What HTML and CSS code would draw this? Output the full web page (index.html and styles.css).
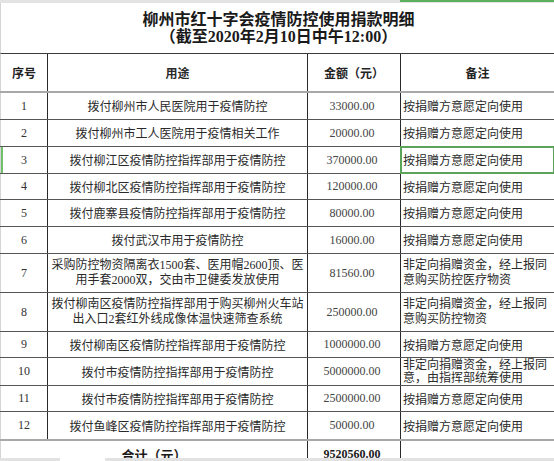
FILE: index.html
```html
<!DOCTYPE html>
<html lang="zh">
<head>
<meta charset="utf-8">
<title>柳州市红十字会疫情防控使用捐款明细</title>
<link rel="stylesheet" href="styles.css">
</head>
<body>
<div class="sheet">
  <div class="topbar"><div class="topgap"></div><div class="topsel"></div></div>
  <div class="title">
    <div>柳州市红十字会疫情防控使用捐款明细</div>
    <div>（截至2020年2月10日中午12:00）</div>
  </div>
  <div class="row head">
    <div class="c seq">序号</div><div class="c use">用途</div><div class="c amt">金额（元）</div><div class="c notehead">备注</div>
  </div>
  <div class="row r27">
    <div class="c seq">1</div><div class="c use">拨付柳州市人民医院用于疫情防控</div><div class="c amt">33000.00</div><div class="c note">按捐赠方意愿定向使用</div>
  </div>
  <div class="row r27">
    <div class="c seq">2</div><div class="c use">拨付柳州市工人医院用于疫情相关工作</div><div class="c amt">20000.00</div><div class="c note">按捐赠方意愿定向使用</div>
  </div>
  <div class="row r27">
    <div class="c seq sel-left">3</div><div class="c use">拨付柳江区疫情防控指挥部用于疫情防控</div><div class="c amt">370000.00</div><div class="c note selected">按捐赠方意愿定向使用</div>
  </div>
  <div class="row r26">
    <div class="c seq">4</div><div class="c use">拨付柳北区疫情防控指挥部用于疫情防控</div><div class="c amt">120000.00</div><div class="c note">按捐赠方意愿定向使用</div>
  </div>
  <div class="row r27">
    <div class="c seq">5</div><div class="c use">拨付鹿寨县疫情防控指挥部用于疫情防控</div><div class="c amt">80000.00</div><div class="c note">按捐赠方意愿定向使用</div>
  </div>
  <div class="row r27">
    <div class="c seq">6</div><div class="c use">拨付武汉市用于疫情防控</div><div class="c amt">16000.00</div><div class="c note">按捐赠方意愿定向使用</div>
  </div>
  <div class="row r39">
    <div class="c seq">7</div><div class="c use multi">采购防控物资隔离衣1500套、医用帽2600顶、医<br>用手套2000双，交由市卫健委发放使用</div><div class="c amt">81560.00</div><div class="c note multi">非定向捐赠资金，经上报同<br>意购买防控医疗物资</div>
  </div>
  <div class="row r39">
    <div class="c seq">8</div><div class="c use multi">拨付柳南区疫情防控指挥部用于购买柳州火车站<br>出入口2套红外线成像体温快速筛查系统</div><div class="c amt">250000.00</div><div class="c note multi">非定向捐赠资金，经上报同<br>意购买防控物资</div>
  </div>
  <div class="row r26">
    <div class="c seq">9</div><div class="c use">拨付柳南区疫情防控指挥部用于疫情防控</div><div class="c amt">1000000.00</div><div class="c note">按捐赠方意愿定向使用</div>
  </div>
  <div class="row r28">
    <div class="c seq">10</div><div class="c use">拨付市疫情防控指挥部用于疫情防控</div><div class="c amt">5000000.00</div><div class="c note tight">非定向捐赠资金，经上报同<br>意，由指挥部统筹使用</div>
  </div>
  <div class="row r26">
    <div class="c seq">11</div><div class="c use">拨付市疫情防控指挥部用于疫情防控</div><div class="c amt">2500000.00</div><div class="c note">按捐赠方意愿定向使用</div>
  </div>
  <div class="row r27 last">
    <div class="c seq">12</div><div class="c use">拨付鱼峰区疫情防控指挥部用于疫情防控</div><div class="c amt">50000.00</div><div class="c note">按捐赠方意愿定向使用</div>
  </div>
  <div class="row total">
    <div class="c sumlabel">合计（元）</div><div class="c amt sum">9520560.00</div><div class="c note"></div>
  </div>
</div>
<div class="bottombar"><div class="bb1"></div><div class="bbgap"></div><div class="bb2"></div></div>
</body>
</html>
```

FILE: styles.css
```css
* { box-sizing: border-box; }

html, body {
  margin: 0;
  padding: 0;
  background: #ffffff;
  overflow: hidden;
}

body {
  font-family: "Liberation Serif", "Noto Sans CJK SC", serif;
  font-size: 12px;
  color: #222;
}

.sheet {
  width: 554px;
}

.topbar {
  height: 3px;
  background: #e3e3e3;
  display: flex;
}

.topgap { width: 400px; }

.topsel {
  flex: 1;
  height: 2px;
  background: #5bb05b;
}

.title {
  height: 51px;
  border-left: 1px solid #d4d4d4;
  border-bottom: 1px solid #3a3a3a;
  display: flex;
  flex-direction: column;
  justify-content: center;
  align-items: center;
  font-size: 16px;
  font-weight: bold;
  line-height: 17.5px;
  color: #1a1a1a;
  padding-left: 2px;
}

.row {
  display: grid;
  grid-template-columns: 48px 260px 93px 153px;
  border-bottom: 1px solid #555;
}

.head {
  height: 39px;
  border-bottom: 2px solid #a8a8a8;
  font-weight: bold;
}

.r26 { height: 26px; }
.r27 { height: 27px; }
.r28 { height: 28px; }
.r39 { height: 39px; }

.row.last { border-bottom: none; }

.total {
  height: 28px;
  border-top: 2px solid #a8a8a8;
  border-bottom: none;
  grid-template-columns: 308px 93px 153px;
}

.c {
  display: flex;
  align-items: center;
  border-right: 1px solid #2a2a2a;
  overflow: hidden;
  white-space: nowrap;
}

.seq {
  justify-content: center;
  border-left: 1px solid #d4d4d4;
  color: #333;
}

.use {
  justify-content: center;
  text-align: center;
  color: #2a2a2a;
}

.amt {
  justify-content: center;
  color: #444;
  padding-right: 4px;
}

.note {
  border-right: none;
  padding-left: 2px;
  color: #2a2a2a;
}

.notehead {
  border-right: none;
  justify-content: center;
}

.head .seq { color: #222; }
.head .amt { color: #222; padding-right: 0; }

.multi {
  line-height: 15.5px;
}

.tight {
  line-height: 13px;
}

.selected {
  outline: 2px solid #5aa55a;
  outline-offset: -1px;
}

.sel-left {
  box-shadow: inset 2px 0 0 #6fbf6f;
}

.sumlabel {
  justify-content: center;
  border-left: 1px solid #d4d4d4;
  font-weight: bold;
  font-size: 13px;
  color: #1a1a1a;
}

.sum {
  font-weight: bold;
  font-size: 12px;
  color: #1a1a1a;
}

.bottombar {
  position: fixed;
  left: 0;
  right: 0;
  bottom: 0;
  height: 3px;
  display: flex;
}

.bb1 { width: 60px; background: #e2e2e2; }
.bbgap { width: 45px; background: transparent; }
.bb2 { flex: 1; background: #e2e2e2; }
```
